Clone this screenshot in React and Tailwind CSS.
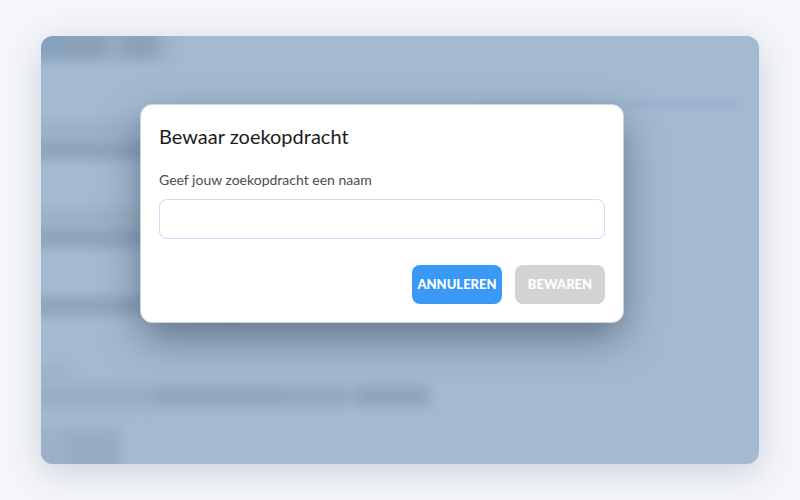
import { useState } from "react";

function Backdrop() {
  return (
    <div aria-hidden="true" className="col-start-1 row-start-1 flex flex-col overflow-hidden rounded-xl bg-[#a4bad0]">
      <div className="-mt-3 -ml-4 flex h-9 blur-[6px]">
        <div className="w-10 bg-[#84a2bf]" />
        <div className="w-10 bg-[#8ba1b8]" />
        <div className="w-5 bg-[#93aabf]" />
        <div className="w-8 bg-[#8ba1b8]" />
        <div className="w-4 bg-[#9bb0c6]" />
      </div>
      <div className="mt-10 mr-5 h-2 bg-linear-to-r from-transparent from-40% to-[#9cb4cf] to-75% blur-[2px]" />
      <div className="mt-3 -ml-4 h-5 w-44 bg-[#9bb1c6] blur-[6px]" />
      <div className="-ml-4 h-5 w-52 bg-[#8fa5bb] blur-[5px]" />
      <div className="mt-12 -ml-4 h-5 w-44 bg-[#9bb1c6] blur-[6px]" />
      <div className="-ml-4 h-5 w-52 bg-[#8fa5bb] blur-[5px]" />
      <div className="mt-12 -ml-4 h-5 w-52 bg-[#90a6bc] blur-[5px]" />
      <div className="mt-12 -ml-4 h-5 w-12 bg-[#9db3c8] blur-[6px]" />
      <div className="-ml-4 flex h-6 items-center blur-[6px]">
        <div className="h-6 w-32 bg-[#98aec3]" />
        <div className="h-5 w-32 bg-[#8fa6bc]" />
        <div className="h-5 w-16 bg-[#90a7bd]" />
        <div className="h-5 w-3 bg-[#98aec3]" />
        <div className="h-5 w-[72px] bg-[#8da4ba]" />
      </div>
      <div className="mt-5 -mb-4 -ml-4 flex grow blur-[6px]">
        <div className="w-10 bg-[#9cb1c7]" />
        <div className="w-14 bg-[#97adc3]" />
      </div>
    </div>
  );
}

function SaveSearchDialog() {
  const [name, setName] = useState("");
  return (
    <form
      role="dialog"
      aria-labelledby="dialog-title"
      onSubmit={(event) => event.preventDefault()}
      className="z-10 col-start-1 row-start-1 mt-[68px] mr-[135px] ml-[99px] self-start rounded-xl border border-[#c9d5e2] bg-white px-[18px] pt-[17px] pb-[18px] shadow-[0_16px_40px_-2px_rgba(50,60,85,0.58)]"
    >
      <h1 id="dialog-title" className="text-[20px] leading-7 text-[#1c1c1e]">Bewaar zoekopdracht</h1>
      <label htmlFor="search-name" className="mt-5 block text-[14px] leading-5 text-[#4c4c4e]">
        Geef jouw zoekopdracht een naam
      </label>
      <input
        id="search-name"
        value={name}
        onChange={(event) => setName(event.target.value)}
        className="mt-[9px] block h-10 w-full rounded-lg border border-[#c8dff7] bg-white px-3 text-[14px] outline-none focus:border-[#3b99f6]"
      />
      <div className="mt-[26px] flex justify-end gap-[13px] text-[13px] font-black text-white">
        <button type="button" className="h-[39px] w-[90px] rounded-lg bg-[#3b99f6]">ANNULEREN</button>
        <button type="submit" disabled={!name} className="h-[39px] w-[90px] rounded-lg bg-[#3b99f6] disabled:bg-[#d3d3d3]">
          BEWAREN
        </button>
      </div>
    </form>
  );
}

export default function App() {
  return (
    <main className="grid min-h-screen bg-[#f4f6fb] px-[41px] py-9 font-['Lato',sans-serif]">
      <div className="grid rounded-xl shadow-[0_8px_36px_rgba(50,55,80,0.2)]">
        <Backdrop />
        <SaveSearchDialog />
      </div>
    </main>
  );
}
